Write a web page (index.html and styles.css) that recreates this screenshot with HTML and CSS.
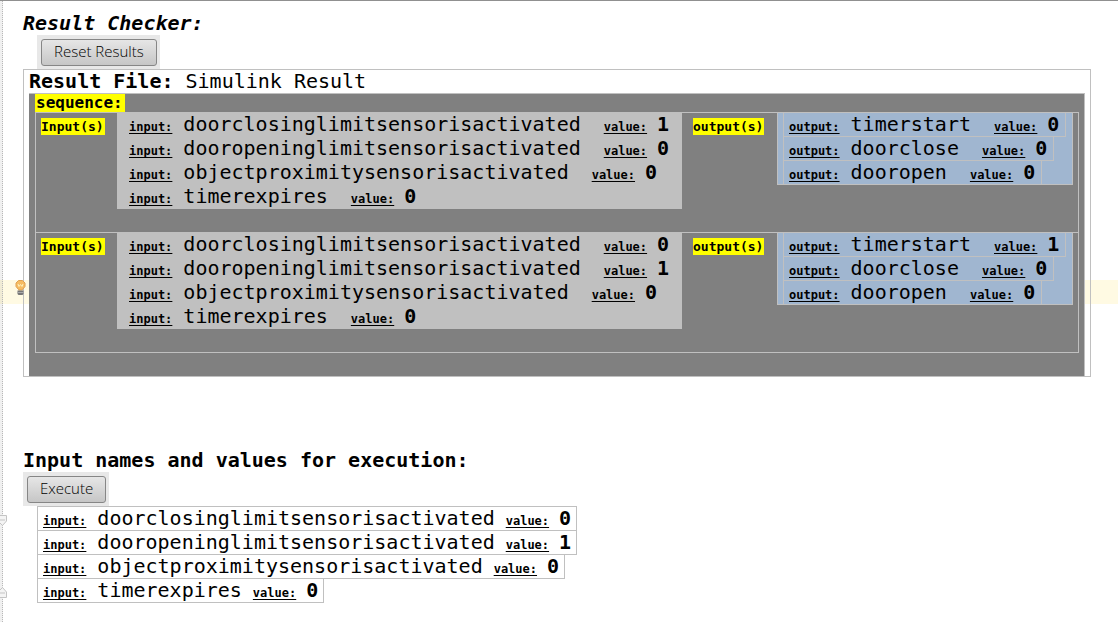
FILE: index.html
```html
<!DOCTYPE html>
<html lang="en">
<head>
<meta charset="utf-8">
<title>Result Checker</title>
<link rel="stylesheet" href="styles.css">
</head>
<body>
<div class="editor">
  <div class="current-line"></div>
  <div class="gutter"></div>
  <svg class="fold fold-open" viewBox="0 0 8 11" aria-hidden="true"><path d="M0 .5H6.500V6L2.500 10.500L0 8M0 5H5" fill="#f4f4f4" stroke="#c4c4c4"/></svg>
  <svg class="fold fold-close" viewBox="0 0 8 11" aria-hidden="true"><path d="M0 10.500H6.500V5L2.500 .500L0 3M0 6H5" fill="#f4f4f4" stroke="#c4c4c4"/></svg>

  <main class="page">
    <h1 class="title">Result Checker:</h1>
    <div class="button-pad reset"><button class="button" type="button">Reset Results</button></div>

    <section class="result">
      <h2 class="file"><b>Result File:</b> Simulink Result</h2>
      <div class="sequence">
        <div class="sequence-head"><span class="mark mark-large">sequence:</span></div>
        <div class="steps">
          <div class="step">
            <div class="tag"><span class="mark">Input(s)</span></div>
            <ul class="inputs">
              <li class="entry"><span class="key">input:</span><span class="name">doorclosinglimitsensorisactivated</span><span class="key">value:</span><b>1</b></li>
              <li class="entry"><span class="key">input:</span><span class="name">dooropeninglimitsensorisactivated</span><span class="key">value:</span><b>0</b></li>
              <li class="entry"><span class="key">input:</span><span class="name">objectproximitysensorisactivated</span><span class="key">value:</span><b>0</b></li>
              <li class="entry"><span class="key">input:</span><span class="name">timerexpires</span><span class="key">value:</span><b>0</b></li>
            </ul>
            <div class="tag tag-output"><span class="mark">output(s)</span></div>
            <ul class="outputs">
              <li class="entry"><span class="key">output:</span><span class="name">timerstart</span><span class="key">value:</span><b>0</b></li>
              <li class="entry"><span class="key">output:</span><span class="name">doorclose</span><span class="key">value:</span><b>0</b></li>
              <li class="entry"><span class="key">output:</span><span class="name">dooropen</span><span class="key">value:</span><b>0</b></li>
            </ul>
          </div>
          <div class="step">
            <div class="tag"><span class="mark">Input(s)</span></div>
            <ul class="inputs">
              <li class="entry"><span class="key">input:</span><span class="name">doorclosinglimitsensorisactivated</span><span class="key">value:</span><b>0</b></li>
              <li class="entry"><span class="key">input:</span><span class="name">dooropeninglimitsensorisactivated</span><span class="key">value:</span><b>1</b></li>
              <li class="entry"><span class="key">input:</span><span class="name">objectproximitysensorisactivated</span><span class="key">value:</span><b>0</b></li>
              <li class="entry"><span class="key">input:</span><span class="name">timerexpires</span><span class="key">value:</span><b>0</b></li>
            </ul>
            <div class="tag tag-output"><span class="mark">output(s)</span></div>
            <ul class="outputs">
              <li class="entry"><span class="key">output:</span><span class="name">timerstart</span><span class="key">value:</span><b>1</b></li>
              <li class="entry"><span class="key">output:</span><span class="name">doorclose</span><span class="key">value:</span><b>0</b></li>
              <li class="entry"><span class="key">output:</span><span class="name">dooropen</span><span class="key">value:</span><b>0</b></li>
            </ul>
          </div>
        </div>
      </div>
    </section>

    <h2 class="subtitle">Input names and values for execution:</h2>
    <div class="button-pad"><button class="button" type="button">Execute</button></div>
    <ul class="execution">
      <li class="entry"><span class="key">input:</span><span class="name">doorclosinglimitsensorisactivated</span><span class="key">value:</span><b>0</b></li>
      <li class="entry"><span class="key">input:</span><span class="name">dooropeninglimitsensorisactivated</span><span class="key">value:</span><b>1</b></li>
      <li class="entry"><span class="key">input:</span><span class="name">objectproximitysensorisactivated</span><span class="key">value:</span><b>0</b></li>
      <li class="entry"><span class="key">input:</span><span class="name">timerexpires</span><span class="key">value:</span><b>0</b></li>
    </ul>
  </main>

  <svg class="bulb" viewBox="0 0 11 16" role="img" aria-label="Suggestion">
    <path d="M3.500 .5H7.500L10 3V6.500L7.500 9.500V10H3.500V9.500L1 6.500V3Z" fill="#f6bc62" stroke="#e0a050"/>
    <path d="M3 4L4 6.500L5.500 4.500L7 6.500L8 4" fill="none" stroke="#fff3c0"/>
    <path d="M2.500 10.500H8.500V14L7.500 15H3.500L2.500 14Z" fill="#777"/>
    <path d="M2.500 12.500H8.500" stroke="#aaa"/>
  </svg>
</div>
</body>
</html>
```
FILE: styles.css
```css
* {
  box-sizing: border-box;
}

body {
  margin: 0;
  background: #fff;
  color: #000;
  font: 20px/24px "DejaVu Sans Mono", monospace;
}

h1, h2, ul {
  margin: 0;
  padding: 0;
  font-size: 20px;
  list-style: none;
}

.editor {
  position: relative;
  min-height: 100vh;
  border-top: 1px solid #909090;
}

/* Editor furniture that lies under or over the document */
.current-line {
  position: absolute;
  top: 279px;
  left: 0;
  right: 0;
  height: 24px;
  background: #fffae3;
}

.gutter {
  position: absolute;
  top: 0;
  bottom: 0;
  left: 0;
  width: 3px;
  background: rgba(0, 0, 0, 0.06);
  border-right: 1px dotted #b8b8b8;
}

.fold {
  position: absolute;
  left: 0;
  width: 8px;
  height: 11px;
}

.fold-open {
  top: 514px;
}

.fold-close {
  top: 586px;
}

.bulb {
  position: absolute;
  top: 279px;
  left: 15px;
  width: 11px;
  height: 16px;
}

.page {
  position: relative;
  padding: 10px 27px 0 23px;
}

.title {
  font-style: italic;
}

.button-pad {
  width: fit-content;
  padding: 4px 3px 3px 4px;
  background: #e8e8e8;
}

.reset {
  margin-left: 14px;
}

.button {
  display: block;
  height: 27px;
  padding: 0 12px 2px;
  border: 1px solid #868686;
  border-radius: 3px;
  background: linear-gradient(#e6e6e6, #c6c6c6);
  color: #000;
  font: 300 15px/23px "Open Sans", "Noto Sans", sans-serif;
}

.result {
  padding: 0 5px;
  border: 1px solid #c0c0c0;
}

.file {
  height: 23px;
  line-height: 22px;
  font-weight: normal;
}

.sequence {
  padding: 0 5px 23px 6px;
  border: 1px solid #c0c0c0;
  border-width: 1px 1px 0 0;
  background: #808080;
}

.sequence-head {
  height: 18px;
}

.mark {
  display: block;
  width: fit-content;
  padding: 0 1px 0 0;
  background: #ff0;
  font-size: 13px;
  font-weight: bold;
  line-height: 17px;
}

.mark-large {
  padding: 0 2px 1px 1px;
  font-size: 16px;
}

.steps {
  border: 1px solid #c0c0c0;
  border-top: 0;
}

.step {
  display: grid;
  grid-template-columns: 81px 565fr 95px 296fr;
  align-items: start;
  padding: 0 5px 23px 0;
  border-top: 1px solid #c0c0c0;
}

.tag {
  padding: 5px 0 0 5px;
}

.tag-output {
  padding-left: 11px;
}

.entry {
  display: flex;
  align-items: baseline;
  width: fit-content;
  height: 24px;
  line-height: 22px;
  white-space: nowrap;
}

.key {
  font-size: 12px;
  font-weight: bold;
  text-decoration: underline;
  text-underline-offset: 2px;
}

.name {
  margin: 0 23px 0 11px;
}

.entry b {
  margin-left: 10px;
}

.inputs {
  padding-left: 12px;
  background: #c0c0c0;
}

.outputs {
  padding-left: 5px;
  border: 1px solid #c0c0c0;
  border-top: 0;
  background: #a0b6d0;
}

.outputs .entry {
  padding: 0 6px 0 5px;
  border: 1px solid #c0c0c0;
  border-top: 0;
}

.outputs .entry:last-child {
  height: 23px;
  border-bottom: 0;
}

.subtitle {
  margin-top: 71px;
}

.execution {
  margin-left: 14px;
}

.execution .entry {
  padding: 0 5px;
  border: 1px solid #c0c0c0;
  border-bottom: 0;
}

.execution .entry:not(:last-child) {
  box-shadow: 0 1px #c0c0c0;
}

.execution .entry:last-child {
  height: 25px;
  border-bottom: 1px solid #c0c0c0;
}

.execution .name {
  margin-right: 11px;
}
```
